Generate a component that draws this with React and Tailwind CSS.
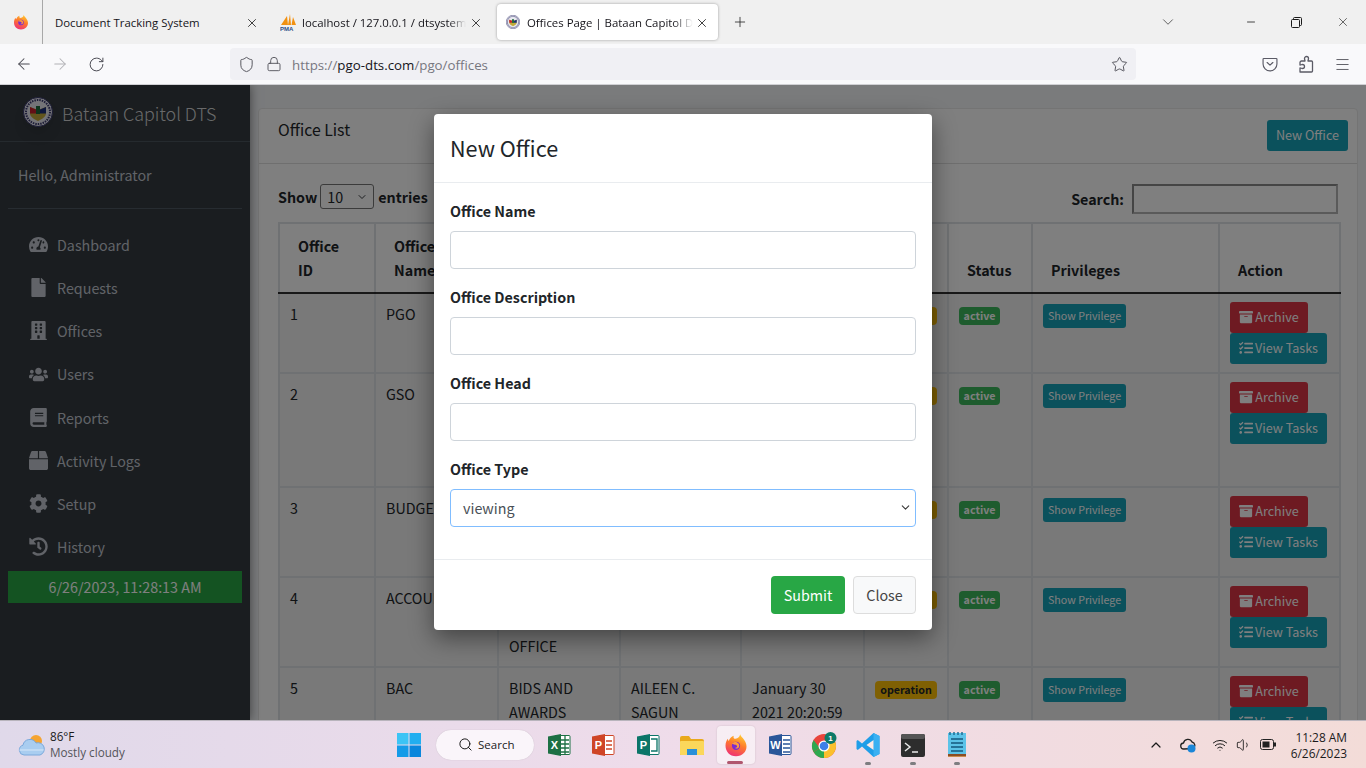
import {
  ArrowLeft, ArrowRight, RotateCw, Shield, Lock, Star, Menu, X, Plus, ChevronDown, Minus, Search, ChevronUp, Wifi, Volume1,
} from "lucide-react";
import {
  FaTachometerAlt, FaFile, FaBuilding, FaUsers, FaBook, FaBox, FaCog, FaHistory, FaArchive, FaTasks,
} from "react-icons/fa";

const PAGE_FONT = "font-['Noto_Sans_CJK_JP','Noto_Sans',sans-serif]";
const UI_FONT = "font-['Open_Sans','Noto_Sans',sans-serif]";

const navItems = [
  { label: "Dashboard", icon: FaTachometerAlt },
  { label: "Requests", icon: FaFile },
  { label: "Offices", icon: FaBuilding },
  { label: "Users", icon: FaUsers },
  { label: "Reports", icon: FaBook },
  { label: "Activity Logs", icon: FaBox },
  { label: "Setup", icon: FaCog },
  { label: "History", icon: FaHistory },
];

const offices = [
  { id: 1, name: "PGO", desc: "", head: "", date: "", height: "h-[80px]" },
  { id: 2, name: "GSO", desc: "", head: "", date: "", height: "h-[114px]" },
  { id: 3, name: "BUDGET", desc: "", head: "", date: "", height: "h-[90px]" },
  { id: 4, name: "ACCOUNTING", desc: "", descLast: "OFFICE", head: "", date: "", height: "h-[90px]" },
  { id: 5, name: "BAC", desc: "BIDS AND AWARDS COMMITTEE", head: "AILEEN C. SAGUN", date: "January 30 2021 20:20:59", height: "h-[114px]" },
];

function FirefoxIcon({ size = 16 }) {
  return (
    <svg width={size} height={size} viewBox="0 0 32 32">
      <defs>
        <linearGradient id={`ff${size}`} x1="0.7" y1="0" x2="0.3" y2="1">
          <stop offset="0" stopColor="#ffcb30" />
          <stop offset="0.45" stopColor="#ff7a2b" />
          <stop offset="1" stopColor="#ee2f78" />
        </linearGradient>
      </defs>
      <path d="M16 31C7.500 31 2 24.600 2 17c0-4 1.400-7.300 3.200-9.300 0 1.300.4 2.400 1.200 3 .8-3.500 3.600-6 6.600-7.200-.6 2-.2 3.300 1 4.300 3.500-.3 6.500-1.300 7.500-6 1 3 3 4 5 7 2.400 3 3.500 6 3.500 9.200C30 25 24.500 31 16 31z" fill={`url(#ff${size})`} />
      <circle cx="16" cy="17" r="5.500" fill="#7b2bd1" />
      <path d="M10.500 14c2-2 5-2.500 7-1.500 2.500 1.200 3.500 4 2.500 6-1 2-4 2.500-5.500 1.500 1.500 0 3-.8 3-2.300 0-1.400-1.600-2.200-3-2.200-1.500 0-2.500-.5-4-1.500z" fill="#ff9a3c" />
    </svg>
  );
}

function SealLogo({ size }) {
  return (
    <svg width={size} height={size} viewBox="0 0 30 30">
      <circle cx="15" cy="15" r="14.500" fill="#e8e8f0" />
      <circle cx="15" cy="15" r="14.500" fill="none" stroke="#34346a" strokeWidth="1" />
      <circle cx="15" cy="15" r="12" fill="none" stroke="#3a3a70" strokeWidth="2" strokeDasharray="1.500 1" />
      <path d="M7 10l8 3 8-3v6c0 4-4 6-8 8-4-2-8-4-8-8z" fill="#c4ab3a" />
      <path d="M7 10l6 2.500v4H7z" fill="#c8202c" />
      <path d="M23 10l-6 2.500v4h6z" fill="#1d2f7a" />
      <rect x="13" y="9" width="4" height="8" fill="#1c6b3a" />
    </svg>
  );
}

function PmaIcon() {
  return (
    <svg width="17" height="18" viewBox="0 0 17 18">
      <path d="M1 12L7 3l1 9zM8 12l2-11 1 11zM11.500 12L13 4l3 8z" fill="#f29111" />
      <text x="0" y="17.500" fontSize="6" fontWeight="700" fill="#2b4f88" fontFamily="Liberation Sans, sans-serif">PMA</text>
    </svg>
  );
}

function PocketIcon() {
  return (
    <svg width="16" height="16" viewBox="0 0 18 18" fill="none" stroke="#5b5b66" strokeWidth="1.300">
      <path d="M2 2.800h14a.8.800 0 0 1 .8.800v5.400a7.800 7.800 0 0 1-15.600 0V3.600a.8.800 0 0 1 .8-.800z" />
      <path d="M5.800 7.300L9 10.300l3.200-3" strokeLinecap="round" strokeLinejoin="round" />
    </svg>
  );
}

function PuzzleIcon() {
  return (
    <svg width="16" height="18" viewBox="0 0 16 18" fill="none" stroke="#5b5b66" strokeWidth="1.300" strokeLinejoin="round">
      <path d="M3.500 6H7C7 5 6.500 4.500 6.500 3.500a2 2 0 0 1 4 0C10.500 4.500 10 5 10 6h3.500a1 1 0 0 1 1 1v9a1 1 0 0 1-1 1H2v-4c1 0 1.500.5 2.500.5a2 2 0 0 0 0-4C3.500 9.500 3 10 2 10V7.500A1.500 1.500 0 0 1 3.500 6z" />
    </svg>
  );
}

function RestoreIcon() {
  return (
    <svg width="11" height="11" viewBox="0 0 11 11" fill="none" stroke="#1a1a1a" strokeWidth="1">
      <rect x="0.500" y="2.500" width="8" height="8" rx="1" />
      <path d="M2.500 2.500V1.500a1 1 0 0 1 1-1h6a1 1 0 0 1 1 1v6a1 1 0 0 1-1 1h-1" />
    </svg>
  );
}

function CloudSun() {
  return (
    <svg width="28" height="24" viewBox="0 0 28 24">
      <circle cx="18" cy="8" r="6" fill="#f5a431" />
      <path d="M6 22a5 5 0 0 1-1-9.800A7 7 0 0 1 18 10a5.500 5.500 0 0 1 4 12z" fill="#a9cdf0" stroke="#7aa9dc" strokeWidth="1" />
      <path d="M1.500 17h24" stroke="#d8e8f8" strokeWidth="1" />
    </svg>
  );
}

function WinLogo() {
  return (
    <svg width="24" height="24" viewBox="0 0 24 24">
      <rect x="0" y="0" width="11.500" height="11.500" fill="#3cc4f5" />
      <rect x="12.500" y="0" width="11.500" height="11.500" fill="#22aef0" />
      <rect x="0" y="12.500" width="11.500" height="11.500" fill="#149be8" />
      <rect x="12.500" y="12.500" width="11.500" height="11.500" fill="#0a86dc" />
    </svg>
  );
}

// office apps share the same shape: coloured plate with a letter and a sheet behind
function OfficeIcon({ color, sheet, letter }) {
  return (
    <svg width="24" height="24" viewBox="0 0 24 24">
      <rect x="8" y="2.500" width="15" height="19" rx="1" fill="#fff" stroke={color} strokeWidth="1" />
      <path d={sheet} stroke={color} strokeWidth="1.300" fill="none" />
      <path d="M1 3.500L14 1v22L1 20.500z" fill={color} />
      <text x="7.500" y="16" textAnchor="middle" fontSize="11" fontWeight="700" fill="#fff" fontFamily="Liberation Sans, sans-serif">{letter}</text>
    </svg>
  );
}

function FolderIcon() {
  return (
    <svg width="26" height="24" viewBox="0 0 26 24">
      <path d="M1 5a2 2 0 0 1 2-2h7l2 3h11a2 2 0 0 1 2 2v13a1 1 0 0 1-1 1H2a1 1 0 0 1-1-1z" fill="#e9a91c" />
      <rect x="1" y="8" width="24" height="14" rx="1" fill="#fbd75b" />
      <rect x="8" y="16" width="10" height="6" fill="#2a8fd8" />
    </svg>
  );
}

function ChromeIcon() {
  return (
    <svg width="26" height="28" viewBox="0 0 26 28">
      <circle cx="13" cy="15" r="12" fill="#e8453c" />
      <path d="M13 15L2.600 21a12 12 0 0 0 10.400 6l5-4z" fill="#2da94f" />
      <path d="M13 15l10.400-6A12 12 0 0 1 13 27z" fill="#fbc02d" />
      <path d="M2.600 9l6 8L2.600 21A12 12 0 0 1 2.600 9z" fill="#2da94f" />
      <circle cx="13" cy="15" r="5.500" fill="#fff" />
      <circle cx="13" cy="15" r="4.300" fill="#3f7fe8" />
      <circle cx="19.500" cy="7" r="6" fill="#0d7a68" />
      <text x="19.500" y="10" textAnchor="middle" fontSize="8" fontWeight="700" fill="#fff" fontFamily="Liberation Sans, sans-serif">1</text>
    </svg>
  );
}

function VsCodeIcon() {
  return (
    <svg width="24" height="26" viewBox="0 0 24 26">
      <path d="M17.500 1L23.500 4v18l-6 3L6 14.500 1.800 18 .5 17V9l1.300-1L6 11.500z" fill="#1f9ee8" />
      <path d="M17.500 1L23.500 4v18l-6 3z" fill="#39b0f2" />
      <path d="M17.500 8l-7 5 7 5z" fill="#fbe9e7" />
    </svg>
  );
}

function TerminalIcon() {
  return (
    <svg width="24" height="24" viewBox="0 0 24 24">
      <rect x="0" y="1" width="24" height="23" rx="2" fill="#2d2d2d" />
      <rect x="0" y="1" width="24" height="5" rx="2" fill="#555" />
      <path d="M4 10l5 4-5 4" stroke="#e8e8e8" strokeWidth="1.500" fill="none" />
      <path d="M11 19h6" stroke="#e8e8e8" strokeWidth="1.500" />
    </svg>
  );
}

function NotepadIcon() {
  return (
    <svg width="20" height="28" viewBox="0 0 20 28">
      <rect x="1" y="2" width="18" height="21" fill="#5cc3e8" />
      <rect x="1" y="23" width="18" height="2" fill="#8a4d24" />
      <rect x="1" y="25" width="18" height="1" fill="#c98b4e" />
      <path d="M3 1v3M7 1v3M11 1v3M15 1v3" stroke="#1f6f94" strokeWidth="1.500" />
      <path d="M4 8h12M4 12h12M4 16h12M4 20h12" stroke="#14597d" strokeWidth="1.600" />
    </svg>
  );
}

function Tab({ children, active, width, closeAt }) {
  return (
    <div className={`relative flex items-center shrink-0 h-[36px] ${width} ${active ? "bg-white rounded shadow-[0_0_3px_rgba(0,0,0,0.35)]" : ""}`}>
      {children}
      <X size={14} strokeWidth={1.4} className={`absolute top-[12px] text-[#1a1a1a] ${closeAt}`} />
    </div>
  );
}

function BrowserChrome() {
  return (
    <div className={`${UI_FONT} shrink-0`}>
      {/* TABS */}
      <div className="h-[44px] bg-[#f0f0f0] flex items-start relative">
        <div className="w-[43px] h-[44px] border-r border-[#a8a8a8] flex items-center justify-center shrink-0">
          <FirefoxIcon size={16} />
        </div>

        <div className="pt-[4px] flex">
          <Tab width="w-[225px]" closeAt="left-[202px]">
            <span className="ml-[12px] pt-[2px] text-[11.400px] text-[#15141a]">Document Tracking System</span>
          </Tab>

          <Tab width="w-[229px]" closeAt="left-[201px]">
            <div className="ml-[12px] w-[17px]"><PmaIcon /></div>
            <span className="ml-[5px] pt-[2px] w-[164px] overflow-hidden whitespace-nowrap text-[11.400px] text-[#15141a] [mask-image:linear-gradient(to_right,black_90%,transparent)]">
              localhost / 127.0.0.1 / dtsystem
            </span>
          </Tab>

          <Tab active width="w-[221px]" closeAt="left-[198px]">
            <div className="ml-[9px]"><SealLogo size={14} /></div>
            <span className="ml-[7px] pt-[2px] w-[166px] overflow-hidden whitespace-nowrap text-[11.400px] text-[#15141a] [mask-image:linear-gradient(to_right,black_88%,transparent)]">
              Offices Page | Bataan Capitol Document
            </span>
          </Tab>

          <div className="ml-[14px] h-[36px] flex items-center">
            <Plus size={16} strokeWidth={1.2} className="text-[#222]" />
          </div>
        </div>

        <div className="absolute right-0 top-0 h-[44px] flex items-center text-[#1a1a1a]">
          <ChevronDown size={18} strokeWidth={1.1} className="mr-[68px] text-[#444]" />
          <Minus size={12} strokeWidth={1.6} className="mr-[34px]" />
          <div className="mr-[34px]"><RestoreIcon /></div>
          <X size={14} strokeWidth={1.1} className="mr-[16px]" />
        </div>
      </div>

      {/* TOOLBAR */}
      <div className="h-[41px] bg-[#f9f9fb] flex items-center border-b border-[#d0d0d4]">
        <ArrowLeft size={18} strokeWidth={1.4} className="ml-[15px] text-[#4a4a52]" />
        <ArrowRight size={18} strokeWidth={1.4} className="ml-[18px] text-[#b2b2b6]" />
        <RotateCw size={17} strokeWidth={1.4} className="ml-[19px] text-[#4a4a52]" />

        <div className="ml-[125px] w-[906px] h-[32px] bg-[#f0f0f4] rounded flex items-center">
          <Shield size={17} strokeWidth={1.4} className="ml-[8px] text-[#55555d]" />
          <Lock size={16} strokeWidth={1.4} className="ml-[11px] text-[#55555d]" />
          <span className="ml-[10px] pt-[3px] text-[13.300px] text-[#77777f]">
            https://<span className="text-[#15141a]">pgo-dts.com</span>/pgo/offices
          </span>
          <Star size={17} strokeWidth={1.4} className="ml-auto mr-[8px] text-[#55555d]" />
        </div>

        <div className="ml-[126px]"><PocketIcon /></div>
        <div className="ml-[20px]"><PuzzleIcon /></div>
        <Menu size={17} strokeWidth={1.3} className="ml-[20px] text-[#55555d]" />
      </div>
    </div>
  );
}

function Sidebar() {
  return (
    <aside className="w-[250px] shrink-0 bg-[#343a40] shadow-[0_0_10px_rgba(0,0,0,0.5)] z-10">
      {/* BRAND */}
      <div className="h-[57px] flex items-center border-b border-[#4b545c] pl-[23px] pb-[3px]">
        <div className="rounded-full shadow-lg"><SealLogo size={30} /></div>
        <span className="ml-[9px] pt-[3px] text-[17.900px] font-light text-[rgba(255,255,255,0.8)]">Bataan Capitol DTS</span>
      </div>

      {/* USER */}
      <div className="mx-[8px] h-[67px] border-b border-[#4f5962] flex items-center pl-[10px]">
        <span className="text-[14.300px] text-[#c2c7d0]">Hello, Administrator</span>
      </div>

      {/* NAV */}
      <nav className="mt-[14px] mx-[8px]">
        {navItems.map((item) => {
          const Icon = item.icon;
          return (
            <div key={item.label} className="h-[43.200px] flex items-center text-[#c2c7d0]">
              <div className="w-[40px] pl-[20px] flex justify-center shrink-0">
                <Icon size={19} className="shrink-0" />
              </div>
              <span className="ml-[9px] text-[14.300px]">{item.label}</span>
            </div>
          );
        })}
      </nav>

      {/* CLOCK */}
      <div className="mx-[8px] mt-[2px] h-[32px] bg-[#28a745] flex items-center justify-center text-[14.300px] text-white">
        6/26/2023, 11:28:13 AM
      </div>
    </aside>
  );
}

function OfficeTable() {
  return (
    <table className="w-[1061px] table-fixed border-collapse text-[14.300px] leading-[24px] text-[#212529]">
      <colgroup>
        <col className="w-[96px]" />
        <col className="w-[123px]" />
        <col className="w-[122px]" />
        <col className="w-[121px]" />
        <col className="w-[123px]" />
        <col className="w-[84px]" />
        <col className="w-[84px]" />
        <col className="w-[187px]" />
        <col className="w-[121px]" />
      </colgroup>

      <thead>
        <tr className="h-[70px]">
          {["Office ID", "Office Name", "Description", "Office Head", "Date Created", "Type", "Status", "Privileges", "Action"].map((th) => (
            <th key={th} className="border-2 border-[#dee2e6] border-b-black/80 pl-[18px] pb-[10px] pr-[20px] align-bottom text-left font-bold">
              {th}
            </th>
          ))}
        </tr>
      </thead>

      <tbody>
        {offices.map((office) => (
          <tr key={office.id} className={`${office.height} bg-black/5`}>
            <td className="border-2 border-[#dee2e6] px-[10px] py-[8px] align-top">{office.id}</td>
            <td className="border-2 border-[#dee2e6] px-[10px] py-[8px] align-top whitespace-nowrap overflow-hidden">{office.name}</td>
            <td className={`border-2 border-[#dee2e6] px-[10px] py-[8px] ${office.descLast ? "align-bottom" : "align-top"}`}>{office.desc || office.descLast}</td>
            <td className="border-2 border-[#dee2e6] px-[10px] py-[8px] align-top">{office.head}</td>
            <td className="border-2 border-[#dee2e6] px-[10px] py-[8px] align-top">{office.date}</td>
            <td className="border-2 border-[#dee2e6] pl-[10px] pt-[13px] align-top">
              <span className="block w-[62px] h-[18px] rounded bg-[#ffc107] text-[10.700px] leading-[18px] font-bold text-center">operation</span>
            </td>
            <td className="border-2 border-[#dee2e6] pl-[10px] pt-[13px] align-top">
              <span className="block w-[41px] h-[18px] rounded bg-[#3cb85c] text-[10.700px] leading-[18px] font-bold text-center text-white">active</span>
            </td>
            <td className="border-2 border-[#dee2e6] pl-[10px] pt-[10px] align-top">
              <button className="block w-[83px] h-[24px] rounded-[3px] bg-[#17a2b8] text-[10.700px] leading-[24px] text-white whitespace-nowrap">Show Privilege</button>
            </td>
            <td className="border-2 border-[#dee2e6] pl-[10px] pt-[8px] align-top">
              <button className="flex items-center justify-center gap-[2px] w-[78px] h-[31px] pb-[2px] rounded-[3px] bg-[#dc3545] text-[12.600px] text-white">
                <FaArchive size={14} /> Archive
              </button>
              <button className="flex items-center justify-center gap-[2px] w-[97px] h-[31px] pb-[2px] rounded-[3px] bg-[#17a2b8] text-[12.600px] text-white">
                <FaTasks size={14} /> View Tasks
              </button>
            </td>
          </tr>
        ))}
      </tbody>
    </table>
  );
}

function MainContent() {
  return (
    <main className="flex-1 min-w-0 bg-[#f4f6f9] pt-[23px] px-[8px] text-[#212529]">
      <div className="bg-white rounded border border-[#e8e8e8] h-[640px]">
        {/* CARD HEADER */}
        <div className="h-[55px] border-b border-[#dfdfdf] flex items-start justify-between pl-[19px] pr-[9px]">
          <span className="mt-[9px] text-[15.800px]">Office List</span>
          <button className="mt-[11px] w-[81px] h-[31px] rounded-[3px] bg-[#17a2b8] text-[12.600px] text-white">New Office</button>
        </div>

        {/* CARD BODY */}
        <div className="pt-[20px] pl-[19px]">
          <div className="w-[1060px] h-[38px] flex items-start justify-between">
            <div className="flex items-center font-bold text-[14.300px] h-[25px]">
              Show
              <div className="relative ml-[3px] mr-[4px] w-[54px] h-[25px] border border-[#767676] rounded-[3px] bg-white/80 font-normal flex items-center pl-[6px]">
                10
                <ChevronDown size={12} strokeWidth={1.8} className="absolute right-[5px] top-[6px]" />
              </div>
              entries
            </div>
            <div className="flex items-center font-bold text-[14.300px]">
              Search:
              <div className="ml-[8px] w-[206px] h-[30px] border-2 border-[#b5b5b5] border-t-[#8a8a8a] border-l-[#8a8a8a]"></div>
            </div>
          </div>
          <OfficeTable />
        </div>
      </div>
    </main>
  );
}

function FormField({ label, children }) {
  return (
    <div className="mb-[16px]">
      <label className="block mb-[8px] text-[14.300px] leading-[24px] font-bold text-[#212529]">{label}</label>
      {children}
    </div>
  );
}

function NewOfficeModal() {
  return (
    <div className="absolute inset-0 z-20 bg-black/50">
      <div className="absolute left-[434px] top-[29px] w-[498px] bg-white rounded shadow-[0_8px_24px_rgba(0,0,0,0.45)]">
        <div className="h-[69px] border-b border-[#e9ecef] flex items-center px-[16px]">
          <h4 className="text-[21.600px] leading-[36px] text-[#212529]">New Office</h4>
        </div>

        <div className="p-[16px]">
          <FormField label="Office Name">
            <input className="block w-full h-[38px] border border-[#ced4da] rounded bg-white" />
          </FormField>
          <FormField label="Office Description">
            <input className="block w-full h-[38px] border border-[#ced4da] rounded bg-white" />
          </FormField>
          <FormField label="Office Head">
            <input className="block w-full h-[38px] border border-[#ced4da] rounded bg-white" />
          </FormField>
          <FormField label="Office Type">
            <div className="relative w-full h-[38px] border border-[#80bdff] rounded bg-white flex items-center pl-[12px] text-[14.300px] text-[#495057]">
              viewing
              <ChevronDown size={13} strokeWidth={2} className="absolute right-[3px] top-[11px] text-[#3a3a3a]" />
            </div>
          </FormField>
        </div>

        <div className="h-[71px] border-t border-[#e9ecef] flex items-start justify-end gap-[8px] px-[16px] pt-[16px]">
          <button className="w-[74px] h-[38px] rounded bg-[#28a745] text-[14.300px] text-white">Submit</button>
          <button className="w-[63px] h-[38px] rounded bg-[#f8f9fa] border border-[#ddd] text-[14.300px] text-[#444]">Close</button>
        </div>
      </div>
    </div>
  );
}

function AppSlot({ children, dot, active }) {
  return (
    <div className="relative w-[44.200px] h-[38px] flex items-center justify-center">
      {active && <div className="absolute left-[3px] top-0 w-[38px] h-[38px] rounded bg-white/50 shadow-[0_0_2px_rgba(0,0,0,0.15)]"></div>}
      <div className="relative">{children}</div>
      {dot && <div className="absolute left-[19px] bottom-[-1px] w-[6px] h-[3px] rounded-full bg-[#7d7d80]"></div>}
      {active && <div className="absolute left-[13px] bottom-[0px] w-[16px] h-[3px] rounded-full bg-[#b0566e]"></div>}
    </div>
  );
}

function Taskbar() {
  return (
    <div className={`${UI_FONT} relative z-30 h-[48px] shrink-0 grid grid-cols-[1fr_auto_1fr] items-center border-t border-[#b8b4bc] bg-gradient-to-r from-[#e0d9ea] via-[#efdcea] to-[#f3dcd8]`}>
      {/* WEATHER */}
      <div className="flex items-center pl-[18px]">
        <CloudSun />
        <div className="ml-[4px] mb-[2px] text-[11.700px] leading-[16px] text-[#1a1a1a]">
          <div>86°F</div>
          <div className="text-[#55555a]">Mostly cloudy</div>
        </div>
      </div>

      {/* APPS */}
      <div className="flex items-center">
        <div className="w-[44px] flex justify-center"><WinLogo /></div>
        <div className="ml-[5px] mr-[3px] w-[98px] h-[30px] rounded-full bg-[#faf5fa] flex items-center pl-[22px] text-[#1a1a1a] shadow-[0_0_1px_rgba(0,0,0,0.2)]">
          <Search size={15} strokeWidth={1.6} />
          <span className="ml-[5px] text-[11.500px]">Search</span>
        </div>
        <AppSlot><OfficeIcon color="#1d7044" letter="X" sheet="M14 7h8M14 11h8M14 15h8M14 19h8M18 3v18" /></AppSlot>
        <AppSlot><OfficeIcon color="#cf4526" letter="P" sheet="M15 8h6M15 12h6M15 16h6" /></AppSlot>
        <AppSlot><OfficeIcon color="#0b7568" letter="P" sheet="M15 6h6v12h-6" /></AppSlot>
        <AppSlot><FolderIcon /></AppSlot>
        <AppSlot active><FirefoxIcon size={24} /></AppSlot>
        <AppSlot><OfficeIcon color="#2a5699" letter="W" sheet="M15 7h7M15 11h7M15 15h7M15 19h7" /></AppSlot>
        <AppSlot><ChromeIcon /></AppSlot>
        <AppSlot dot><VsCodeIcon /></AppSlot>
        <AppSlot dot><TerminalIcon /></AppSlot>
        <AppSlot dot><NotepadIcon /></AppSlot>
      </div>

      {/* TRAY */}
      <div className="flex items-center justify-end text-[#1a1a1a]">
        <ChevronUp size={16} strokeWidth={1.8} className="mr-[16px]" />
        <svg width="16" height="16" viewBox="0 0 16 16" className="mr-[16px]">
          <path d="M4 12a3 3 0 0 1-.5-6A4.500 4.500 0 0 1 12 5a3.500 3.500 0 0 1 1 6.500z" fill="none" stroke="#222" strokeWidth="1.300" />
          <circle cx="11.500" cy="11.500" r="4" fill="#1a86d8" />
        </svg>
        <Wifi size={16} strokeWidth={1.5} className="mr-[8px]" />
        <Volume1 size={16} strokeWidth={1.3} className="mr-[8px]" />
        <svg width="16" height="11" viewBox="0 0 16 11" className="mr-[15px]">
          <rect x="0.500" y="0.500" width="13" height="10" rx="2" fill="none" stroke="#222" />
          <rect x="2.500" y="2.500" width="7" height="6" fill="#222" />
          <rect x="14" y="3.500" width="2" height="4" fill="#222" />
        </svg>
        <div className="mr-[19px] text-[11.900px] leading-[16px] text-right">
          <div>11:28 AM</div>
          <div>6/26/2023</div>
        </div>
      </div>
    </div>
  );
}

export default function App() {
  return (
    <div className="w-[1366px] h-[768px] overflow-hidden flex flex-col">
      <BrowserChrome />

      <div className={`${PAGE_FONT} relative flex-1 min-h-0 flex overflow-hidden`}>
        <Sidebar />
        <MainContent />
        <NewOfficeModal />
      </div>

      <Taskbar />
    </div>
  );
}
